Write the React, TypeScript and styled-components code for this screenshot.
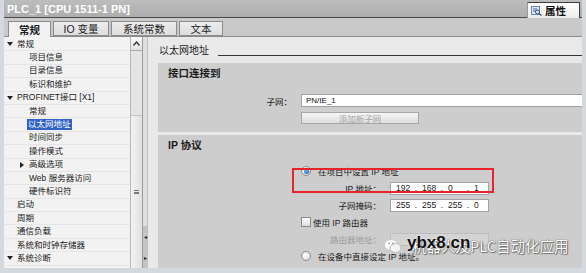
import React from "react";
import styled, { createGlobalStyle } from "styled-components";

const Global = createGlobalStyle`
  html, body { margin: 0; padding: 0; background: #d4d8df; }
  * { box-sizing: border-box; }
`;

const FONT = `"Liberation Sans", "Noto Sans CJK SC", sans-serif`;

const Root = styled.div`
  position: relative;
  width: 586px;
  height: 273px;
  background: #d4d8df;
  padding: 0 4px 5px 4px;
  display: flex;
  flex-direction: column;
  font-family: ${FONT};
  color: #1a1a1a;
  overflow: hidden;
`;

const TitleBar = styled.div`
  height: 18px;
  flex: none;
  background: linear-gradient(#bdbdbd, #adadad);
  border-bottom: 1px solid #4a4a4a;
  display: flex;
  align-items: center;
  justify-content: space-between;
  padding-left: 3px;
`;

const TitleText = styled.span`
  color: #ffffff;
  font-size: 11px;
  font-weight: 700;
`;

const PropTab = styled.div`
  align-self: flex-end;
  height: 16px;
  margin-bottom: -1px;
  margin-right: 2px;
  width: 53px;
  background: linear-gradient(#ffffff, #ececec);
  border: 1px solid #3c3c3c;
  border-bottom: none;
  border-left-color: #9a9a9a;
  display: flex;
  align-items: center;
  gap: 3px;
  padding-left: 3px;
  font-size: 10.5px;
  font-weight: 700;
  color: #111;
`;

const TabRow = styled.div`
  height: 19px;
  flex: none;
  background: #c9c9c9;
  border-bottom: 1px solid #8a8a8a;
  display: flex;
  align-items: flex-end;
  gap: 2px;
  padding-left: 4px;
`;

const Tab = styled.div<{ $active?: boolean; $w: number }>`
  width: ${(p) => p.$w}px;
  height: ${(p) => (p.$active ? 16 : 15)}px;
  margin-bottom: ${(p) => (p.$active ? -1 : 0)}px;
  background: ${(p) => (p.$active ? "#f2f2f2" : "linear-gradient(#ececec, #dedede)")};
  border: 1px solid #8c8c8c;
  border-bottom: ${(p) => (p.$active ? "none" : "1px solid #8c8c8c")};
  display: flex;
  align-items: center;
  justify-content: center;
  font-size: 10.5px;
  font-weight: ${(p) => (p.$active ? 700 : 400)};
  color: #1c1c1c;
`;

const Main = styled.div`
  flex: 1;
  display: flex;
  min-height: 0;
`;

const Tree = styled.div`
  width: 126px;
  flex: none;
  background: #f2f2f2;
  padding-top: 1px;
  display: flex;
  flex-direction: column;
`;

const Row = styled.div<{ $indent: number }>`
  height: 13.4px;
  flex: none;
  display: flex;
  align-items: center;
  border-bottom: 1px solid #e5e5e5;
  padding-left: ${(p) => p.$indent}px;
  font-size: 8.5px;
  white-space: nowrap;
  position: relative;
`;

const Caret = styled.span<{ $dir: "down" | "right"; $x: number }>`
  position: absolute;
  left: ${(p) => p.$x}px;
  top: 50%;
  width: 0;
  height: 0;
  ${(p) =>
    p.$dir === "down"
      ? `border-left: 3px solid transparent; border-right: 3px solid transparent; border-top: 4px solid #222; margin-top: -2px;`
      : `border-top: 3px solid transparent; border-bottom: 3px solid transparent; border-left: 4px solid #222; margin-top: -3px;`}
`;

const RowLabel = styled.span<{ $selected?: boolean }>`
  padding: 0 1px;
  line-height: 11px;
  background: ${(p) => (p.$selected ? "#2f62c4" : "transparent")};
  color: ${(p) => (p.$selected ? "#ffffff" : "#1a1a1a")};
`;

const ScrollBar = styled.div`
  width: 13px;
  flex: none;
  background: #e4e4e4;
  border-left: 1px solid #b8b8b8;
  border-right: 1px solid #9c9c9c;
  display: flex;
  flex-direction: column;
`;

const ScrollBtn = styled.div`
  height: 14px;
  flex: none;
  background: linear-gradient(#fafafa, #e2e2e2);
  border-bottom: 1px solid #a8a8a8;
  display: flex;
  align-items: center;
  justify-content: center;
`;

const ScrollSpace = styled.div`
  height: 64px;
  flex: none;
`;

const Thumb = styled.div`
  flex: 1;
  background: linear-gradient(90deg, #f3f3f3, #e0e0e0);
  border-top: 1px solid #c4c4c4;
  display: flex;
  align-items: center;
  justify-content: center;
`;

const Grip = styled.div`
  width: 5px;
  height: 4px;
  border-top: 1px solid #777;
  border-bottom: 1px solid #777;
  position: relative;
  &::after {
    content: "";
    position: absolute;
    left: 0;
    right: 0;
    top: 1px;
    border-top: 1px solid #777;
  }
`;

const Splitter = styled.div`
  width: 5px;
  flex: none;
  background: #dedede;
  border-right: 1px solid #c0c0c0;
  display: flex;
  flex-direction: column;
  justify-content: flex-end;
`;

const SplitHandle = styled.div`
  height: 42px;
  background: #c4c4c4;
  display: flex;
  flex-direction: column;
  align-items: center;
  justify-content: space-around;
  font-size: 6px;
  color: #222;
  line-height: 6px;
`;

const Content = styled.div`
  flex: 1;
  background: #e9e9e9;
  display: flex;
  flex-direction: column;
  min-width: 0;
`;

const Header = styled.div`
  height: 20px;
  flex: none;
  display: flex;
  align-items: flex-end;
  padding-left: 11px;
`;

const HeaderTitle = styled.span`
  font-size: 10px;
  line-height: 13px;
  color: #222;
`;

const HeaderLine = styled.div`
  flex: 1;
  margin-left: 9px;
  border-bottom: 1px solid #333;
  margin-bottom: 1px;
`;

const Sections = styled.div`
  flex: 1;
  display: flex;
  flex-direction: column;
  gap: 3px;
  padding: 6px 0 0 10px;
  min-height: 0;
`;

const Section = styled.div<{ $h?: number }>`
  position: relative;
  background: #cdcdcd;
  padding: 3px 0 0 10px;
  ${(p) => (p.$h ? `height: ${p.$h}px; flex: none;` : `flex: 1;`)}
`;

const SectionTitle = styled.div`
  font-size: 10.5px;
  font-weight: 700;
  line-height: 14px;
  color: #1a1a1a;
`;

const FormRow = styled.div<{ $top?: number }>`
  display: flex;
  align-items: center;
  height: 13px;
  margin-top: ${(p) => p.$top ?? 0}px;
  margin-left: -10px;
`;

const FieldLabel = styled.span<{ $w: number; $disabled?: boolean }>`
  width: ${(p) => p.$w}px;
  flex: none;
  text-align: right;
  padding-right: 9px;
  font-size: 8.5px;
  color: ${(p) => (p.$disabled ? "#9c9c9c" : "#1a1a1a")};
  white-space: nowrap;
`;

const TextInput = styled.div<{ $w?: number; $disabled?: boolean }>`
  height: 13px;
  ${(p) => (p.$w ? `width: ${p.$w}px; flex: none;` : `flex: 1;`)}
  background: ${(p) => (p.$disabled ? "#d6d6d6" : "#ffffff")};
  border: 1px solid ${(p) => (p.$disabled ? "#bcbcbc" : "#a2a2a2")};
  border-right: ${(p) => (p.$w ? undefined : "none")};
  display: flex;
  align-items: center;
  padding-left: 4px;
  font-size: 8px;
  color: #111;
  white-space: nowrap;
`;

const Button = styled.div`
  margin-left: 133px;
  margin-top: 5px;
  width: 118px;
  height: 12px;
  background: linear-gradient(#f6f6f6, #dddddd);
  border: 1px solid #a6a6a6;
  display: flex;
  align-items: center;
  justify-content: center;
  font-size: 8.5px;
  color: #a5a5a5;
`;

const Options = styled.div`
  margin-top: 12px;
  display: flex;
  flex-direction: column;
  gap: 3px;
`;

const OptionRow = styled.div<{ $indent?: number }>`
  height: 14px;
  display: flex;
  align-items: center;
  padding-left: ${(p) => p.$indent ?? 133}px;
  font-size: 8.5px;
  color: #1a1a1a;
  white-space: nowrap;
`;

const Radio = styled.span<{ $checked?: boolean }>`
  width: 10px;
  height: 10px;
  flex: none;
  border-radius: 50%;
  border: 1px solid #8a8a8a;
  background: radial-gradient(circle at 40% 35%, #ffffff, #d8d8d8);
  margin-right: 7px;
  display: flex;
  align-items: center;
  justify-content: center;
  &::after {
    content: "";
    display: ${(p) => (p.$checked ? "block" : "none")};
    width: 5px;
    height: 5px;
    border-radius: 50%;
    background: radial-gradient(circle at 40% 35%, #6fb6ff, #1458b8);
  }
`;

const Check = styled.span`
  width: 10px;
  height: 10px;
  flex: none;
  border: 1px solid #8a8a8a;
  background: linear-gradient(#ffffff, #dcdcdc);
  margin-right: 2px;
`;

const FieldRow = styled.div`
  height: 14px;
  display: flex;
  align-items: center;
  margin-left: -10px;
`;

const IpBox = styled.div<{ $disabled?: boolean }>`
  width: 99px;
  height: 13px;
  flex: none;
  background: ${(p) => (p.$disabled ? "#d4d4d4" : "#ffffff")};
  border: 1px solid ${(p) => (p.$disabled ? "#bdbdbd" : "#a2a2a2")};
  display: flex;
  align-items: center;
  padding-left: 5px;
  font-size: 8.5px;
  color: #222;
`;

const IpSeg = styled.span`
  width: 26px;
  flex: none;
  display: flex;
  justify-content: space-between;
  padding-right: 5px;
  &:last-child { width: auto; }
`;

const Highlight = styled.div`
  position: absolute;
  left: 134px;
  top: 33px;
  width: 202px;
  height: 25px;
  border: 2px solid #e8232a;
  pointer-events: none;
`;

const Watermark = styled.div`
  position: absolute;
  left: 384px;
  top: 236px;
  display: flex;
  align-items: center;
  pointer-events: none;
`;

const WmBubble = styled.div`
  width: 18px;
  height: 16px;
  margin-right: 5px;
`;

const WmStack = styled.div`
  position: relative;
  height: 20px;
`;

const WmBack = styled.span`
  font-family: "Noto Sans CJK SC", sans-serif;
  font-size: 14.5px;
  line-height: 20px;
  color: #ffffff;
  margin-left: 5px;
  white-space: nowrap;
  text-shadow: 0 0 1px #555, 0 0 1px #555, 1px 1px 1px #777;
`;

const WmFront = styled.span`
  position: absolute;
  left: 0;
  top: -3px;
  font-family: "Liberation Sans", sans-serif;
  font-size: 17px;
  font-weight: 700;
  line-height: 20px;
  color: #111;
  white-space: nowrap;
  text-shadow: 0 0 2px #fff;
`;

type Item = { label: string; indent: number; caret?: "down" | "right"; caretX?: number; selected?: boolean };

const items: Item[] = [
  { label: "常规", indent: 12, caret: "down", caretX: 3 },
  { label: "项目信息", indent: 24 },
  { label: "目录信息", indent: 24 },
  { label: "标识和维护", indent: 24 },
  { label: "PROFINET接口 [X1]", indent: 12, caret: "down", caretX: 3 },
  { label: "常规", indent: 24 },
  { label: "以太网地址", indent: 23, selected: true },
  { label: "时间同步", indent: 24 },
  { label: "操作模式", indent: 24 },
  { label: "高级选项", indent: 24, caret: "right", caretX: 16 },
  { label: "Web 服务器访问", indent: 24 },
  { label: "硬件标识符", indent: 24 },
  { label: "启动", indent: 12 },
  { label: "周期", indent: 12 },
  { label: "通信负载", indent: 12 },
  { label: "系统和时钟存储器", indent: 12 },
  { label: "系统诊断", indent: 12, caret: "down", caretX: 3 },
];

const Ip = ({ parts, disabled }: { parts: string[]; disabled?: boolean }) => (
  <IpBox $disabled={disabled}>
    {parts.map((p, i) => (
      <IpSeg key={i}>
        <span>{p}</span>
        {i < parts.length - 1 && <span>.</span>}
      </IpSeg>
    ))}
  </IpBox>
);

export default function App() {
  return (
    <>
      <Global />
      <Root>
        <TitleBar>
          <TitleText>PLC_1 [CPU 1511-1 PN]</TitleText>
          <PropTab>
            <svg width="11" height="10" viewBox="0 0 11 10">
              <rect x="0.5" y="0.5" width="8" height="8" fill="#dfe8f5" stroke="#6b86b4" />
              <line x1="2" y1="3" x2="6" y2="3" stroke="#4a66a0" />
              <line x1="2" y1="5" x2="5" y2="5" stroke="#4a66a0" />
              <circle cx="6.5" cy="6" r="2" fill="none" stroke="#2d4f8e" />
              <line x1="8" y1="7.5" x2="10.5" y2="9.5" stroke="#2d4f8e" strokeWidth="1.3" />
            </svg>
            属性
          </PropTab>
        </TitleBar>
        <TabRow>
          <Tab $active $w={43}>常规</Tab>
          <Tab $w={56}>IO 变量</Tab>
          <Tab $w={66}>系统常数</Tab>
          <Tab $w={44}>文本</Tab>
        </TabRow>
        <Main>
          <Tree>
            {items.map((it, i) => (
              <Row key={i} $indent={it.indent}>
                {it.caret && <Caret $dir={it.caret} $x={it.caretX ?? 3} />}
                <RowLabel $selected={it.selected}>{it.label}</RowLabel>
              </Row>
            ))}
          </Tree>
          <ScrollBar>
            <ScrollBtn>
              <svg width="7" height="5" viewBox="0 0 7 5">
                <polyline points="0.5,4.5 3.5,1 6.5,4.5" fill="none" stroke="#333" strokeWidth="1.3" />
              </svg>
            </ScrollBtn>
            <ScrollSpace />
            <Thumb>
              <Grip />
            </Thumb>
          </ScrollBar>
          <Splitter>
            <SplitHandle>
              <span>◂</span>
              <span>▸</span>
            </SplitHandle>
          </Splitter>
          <Content>
            <Header>
              <HeaderTitle>以太网地址</HeaderTitle>
              <HeaderLine />
            </Header>
            <Sections>
              <Section $h={69}>
                <SectionTitle>接口连接到</SectionTitle>
                <FormRow $top={14}>
                  <FieldLabel $w={143}>子网：</FieldLabel>
                  <TextInput>PN/IE_1</TextInput>
                </FormRow>
                <Button>添加新子网</Button>
              </Section>
              <Section>
                <SectionTitle>IP 协议</SectionTitle>
                <Options>
                  <OptionRow>
                    <Radio $checked />
                    在项目中设置 IP 地址
                  </OptionRow>
                  <FieldRow>
                    <FieldLabel $w={232}>IP 地址：</FieldLabel>
                    <Ip parts={["192", "168", "0", "1"]} />
                  </FieldRow>
                  <FieldRow>
                    <FieldLabel $w={232}>子网掩码：</FieldLabel>
                    <Ip parts={["255", "255", "255", "0"]} />
                  </FieldRow>
                  <OptionRow>
                    <Check />
                    使用 IP 路由器
                  </OptionRow>
                  <FieldRow>
                    <FieldLabel $w={232} $disabled>
                      路由器地址：
                    </FieldLabel>
                    <IpBox $disabled />
                  </FieldRow>
                  <OptionRow>
                    <Radio />
                    在设备中直接设定 IP 地址。
                  </OptionRow>
                </Options>
                <Highlight />
              </Section>
            </Sections>
          </Content>
        </Main>
        <Watermark>
          <WmBubble>
            <svg width="18" height="16" viewBox="0 0 18 16">
              <ellipse cx="7" cy="7" rx="6.5" ry="5.5" fill="#ffffff" stroke="#c8c8c8" />
              <ellipse cx="11.5" cy="10" rx="5.5" ry="4.5" fill="#f4f4f4" stroke="#bdbdbd" />
              <circle cx="5" cy="5.5" r="0.9" fill="#9a9a9a" />
              <circle cx="9" cy="5.5" r="0.9" fill="#9a9a9a" />
            </svg>
          </WmBubble>
          <WmStack>
            <WmBack>机器人及PLC自动化应用</WmBack>
            <WmFront>ybx8.cn</WmFront>
          </WmStack>
        </Watermark>
      </Root>
    </>
  );
}
